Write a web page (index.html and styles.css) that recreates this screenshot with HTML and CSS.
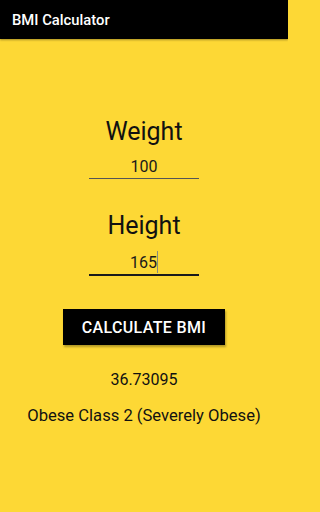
FILE: index.html
```html
<!DOCTYPE html>
<html>
<head>
<meta charset="utf-8">
<link rel="stylesheet" href="styles.css">
</head>
<body>
<div class="toolbar"><span class="title">BMI Calculator</span></div>
<main class="content">
  <div class="label">Weight</div>
  <div class="field">100</div>
  <div class="label label-height">Height</div>
  <div class="field field-focused">165<span class="caret"></span></div>
  <div class="button">CALCULATE BMI</div>
  <div class="value">36.73095</div>
  <div class="category">Obese Class 2 (Severely Obese)</div>
</main>
</body>
</html>
```
FILE: styles.css
```css
html {
  background: #fdd835;
}
html, body {
  margin: 0;
  padding: 0;
}
body {
  width: 288px;
  height: 512px;
  background: #fdd835;
  font-family: Roboto, "Noto Sans", sans-serif;
  color: #111;
  overflow: hidden;
}
.toolbar {
  height: 39px;
  background: #000;
  padding-left: 12px;
  display: flex;
  align-items: center;
  box-shadow: 0 1px 2px rgba(0,0,0,0.35);
}
.title {
  color: #fff;
  font-size: 14.8px;
  font-weight: 500;
  line-height: 20px;
  padding-top: 1px;
}
.content {
  display: flex;
  flex-direction: column;
  align-items: center;
  padding-top: 78px;
}
.label {
  font-size: 25px;
  line-height: 30px;
  color: #111;
}
.label-height {
  margin-top: 32px;
}
.field {
  margin-top: 10px;
  width: 110px;
  text-align: center;
  font-size: 16px;
  line-height: 20px;
  padding-bottom: 1px;
  border-bottom: 1px solid #555;
  color: #1a1a1a;
}
.field-focused {
  border-bottom: 2px solid #1a1a1a;
}
.caret {
  display: inline-block;
  width: 1px;
  height: 22px;
  background: #8a8a7a;
  vertical-align: -5px;
}
.button {
  margin-top: 33px;
  width: 162px;
  height: 36px;
  background: #000;
  color: #fff;
  font-size: 16px;
  font-weight: 500;
  letter-spacing: 0.35px;
  display: flex;
  align-items: center;
  justify-content: center;
  box-shadow: 1px 2px 2px rgba(0,0,0,0.3);
}
.value {
  margin-top: 25px;
  font-size: 16px;
  line-height: 20px;
}
.category {
  margin-top: 15px;
  font-size: 16.6px;
  line-height: 22px;
}
```
